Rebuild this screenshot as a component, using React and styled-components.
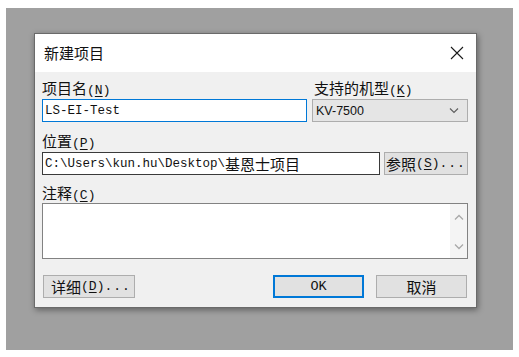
import React from "react";
import styled, { createGlobalStyle } from "styled-components";

const Global = createGlobalStyle`
  html, body { margin: 0; padding: 0; background: #ffffff; }
  body { font-family: "Noto Sans CJK SC", "Liberation Sans", sans-serif; color: #111; }
  * { box-sizing: border-box; }
`;

const Backdrop = styled.div`
  margin: 8px 6px 7px 6px;
  width: 507px;
  height: 342px;
  background: #a0a0a0;
  padding: 25px 0 0 28px;
`;

const Dialog = styled.div`
  width: 443px;
  height: 275px;
  border: 1px solid #6a6a6a;
  background: #f0f0f0;
  display: flex;
  flex-direction: column;
  box-shadow: 1px 2px 6px rgba(0, 0, 0, 0.4);
`;

const TitleBar = styled.div`
  height: 38px;
  background: #ffffff;
  display: flex;
  align-items: center;
  justify-content: space-between;
  padding: 0 12px 0 9px;
`;

const Title = styled.span`
  font-size: 15px;
  line-height: 20px;
  color: #111;
`;

const CloseX = styled.svg`
  width: 14px;
  height: 14px;
  display: block;
`;

const Body = styled.div`
  flex: 1;
  padding: 6px 8px 9px 7px;
  display: flex;
  flex-direction: column;
`;

const Row = styled.div`
  display: grid;
  grid-template-columns: ${(p) => p.$cols};
  column-gap: ${(p) => p.$gap || "0px"};
  margin-top: ${(p) => p.$top || "0px"};
  align-items: end;
`;

const Field = styled.div`
  display: flex;
  flex-direction: column;
`;

const Label = styled.div`
  font-size: 15px;
  line-height: 20px;
  height: 20px;
  margin-bottom: ${(p) => p.$gap || "1px"};
  padding-left: ${(p) => p.$indent || "0px"};
  white-space: nowrap;
  color: #111;
`;

const Paren = styled.span`
  font-family: "Liberation Mono", monospace;
  font-size: 13px;
`;

const Key = styled.span`
  text-decoration: underline;
  text-underline-offset: 2px;
`;

const Mnemonic = ({ k }) => (
  <Paren>
    (<Key>{k}</Key>)
  </Paren>
);

const TextBox = styled.div`
  height: 23px;
  background: #ffffff;
  border: 1px solid ${(p) => p.$border};
  display: flex;
  align-items: center;
  padding-left: 2px;
  font-family: "Liberation Mono", "Noto Sans CJK SC", monospace;
  font-size: 12.5px;
  color: #111;
  white-space: nowrap;
  overflow: hidden;
`;

const Wide = styled.span`
  font-family: "Noto Sans CJK SC", sans-serif;
  font-size: 15px;
`;

const Combo = styled.div`
  height: 23px;
  background: #e5e5e5;
  border: 1px solid #adadad;
  display: flex;
  align-items: center;
  justify-content: space-between;
  padding: 0 8px 0 3px;
  font-family: "Liberation Sans", sans-serif;
  font-size: 12.5px;
  color: #111;
`;

const Chevron = styled.svg`
  width: 10px;
  height: 6px;
  display: block;
`;

const Button = styled.div`
  width: ${(p) => p.$w};
  height: 23px;
  background: #e1e1e1;
  border: ${(p) => (p.$default ? "2px solid #0078d7" : "1px solid #adadad")};
  display: flex;
  align-items: center;
  justify-content: ${(p) => (p.$left ? "flex-start" : "center")};
  padding-left: ${(p) => (p.$left ? "7px" : "0")};
  font-size: 15px;
  line-height: 20px;
  color: #111;
  white-space: nowrap;
`;

const Dots = styled.span`
  font-family: "Liberation Mono", monospace;
  font-size: 13px;
  letter-spacing: 1px;
`;

const Mono = styled.span`
  font-family: "Liberation Mono", monospace;
  font-size: 13.5px;
`;

const TextArea = styled.div`
  height: 56px;
  background: #ffffff;
  border: 1px solid #828282;
  display: flex;
  justify-content: flex-end;
`;

const ScrollBar = styled.div`
  width: 17px;
  background: #f4f4f4;
  display: flex;
  flex-direction: column;
  justify-content: space-between;
  align-items: center;
  padding: 10px 0 8px;
`;

const ButtonRow = styled.div`
  display: flex;
  align-items: center;
  margin-top: 16px;
  padding: 0 1px;
  gap: 12px;
`;

const Spacer = styled.div`
  flex: 1;
`;

const Arrow = ({ up }) => (
  <Chevron viewBox="0 0 10 6">
    <path
      d={up ? "M1 5.5 L5 1.5 L9 5.5" : "M1 0.5 L5 4.5 L9 0.5"}
      fill="none"
      stroke="#a8a8a8"
      strokeWidth="1.3"
    />
  </Chevron>
);

export default function App() {
  return (
    <>
      <Global />
      <Backdrop>
        <Dialog>
          <TitleBar>
            <Title>新建项目</Title>
            <CloseX viewBox="0 0 14 14">
              <path d="M1 1 L13 13 M13 1 L1 13" stroke="#1a1a1a" strokeWidth="1.1" fill="none" />
            </CloseX>
          </TitleBar>
          <Body>
            <Row $cols="265px 156px" $gap="5px">
              <Field>
                <Label>
                  项目名<Mnemonic k="N" />
                </Label>
                <TextBox $border="#0078d7">LS-EI-Test</TextBox>
              </Field>
              <Field>
                <Label $indent="2px">
                  支持的机型<Mnemonic k="K" />
                </Label>
                <Combo>
                  <span>KV-7500</span>
                  <Chevron viewBox="0 0 10 6">
                    <path d="M1 0.5 L5 4.5 L9 0.5" fill="none" stroke="#606060" strokeWidth="1.2" />
                  </Chevron>
                </Combo>
              </Field>
            </Row>
            <Row $cols="338px 84px" $gap="4px" $top="9px">
              <Field>
                <Label>
                  位置<Mnemonic k="P" />
                </Label>
                <TextBox $border="#3a3a3a">
                  C:\Users\kun.hu\Desktop\<Wide>基恩士项目</Wide>
                </TextBox>
              </Field>
              <Button $w="84px">
                参照<Mnemonic k="S" />
                <Dots>...</Dots>
              </Button>
            </Row>
            <Row $cols="426px" $top="8px">
              <Field>
                <Label $gap="0px">
                  注释<Mnemonic k="C" />
                </Label>
                <TextArea>
                  <ScrollBar>
                    <Arrow up />
                    <Arrow />
                  </ScrollBar>
                </TextArea>
              </Field>
            </Row>
            <ButtonRow>
              <Button $w="92px" $left>
                详细<Mnemonic k="D" />
                <Dots>...</Dots>
              </Button>
              <Spacer />
              <Button $w="91px" $default>
                <Mono>OK</Mono>
              </Button>
              <Button $w="91px">取消</Button>
            </ButtonRow>
          </Body>
        </Dialog>
      </Backdrop>
    </>
  );
}
